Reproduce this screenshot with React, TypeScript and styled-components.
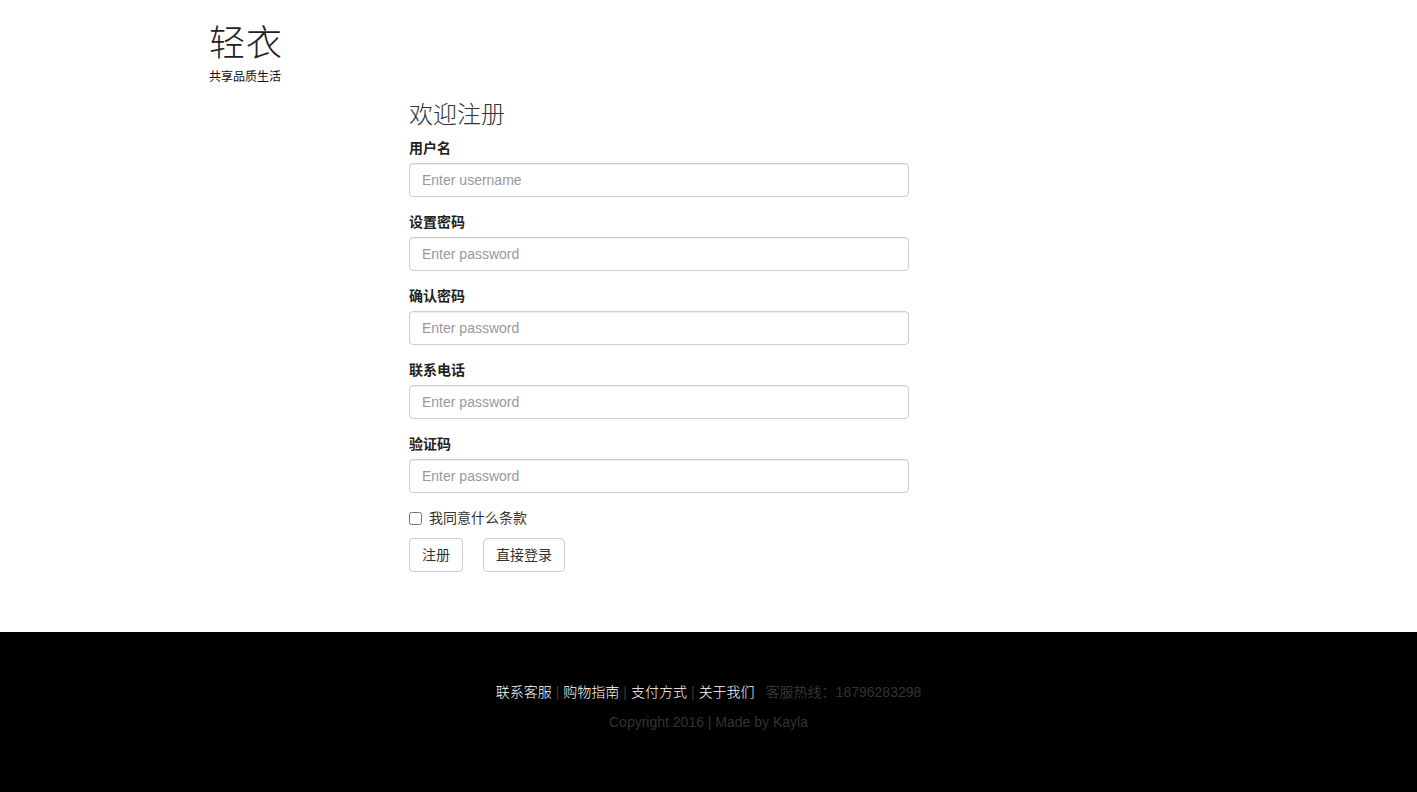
import React from 'react';
import styled, { createGlobalStyle } from 'styled-components';

const GlobalStyle = createGlobalStyle`
	html, body {
		margin: 0;
		padding: 0;
		background: #fff;
	}
	body {
		font-family: "Liberation Sans", "Noto Sans CJK SC", Arial, sans-serif;
		font-size: 14px;
		line-height: 20px;
		color: #333;
	}
	* {
		box-sizing: border-box;
	}
`;

const Header = styled.header`
	padding: 16px 0 0 209px;
`;

const Logo = styled.h1`
	margin: 0;
	font-family: "Noto Sans CJK SC", serif;
	font-weight: 300;
	font-size: 36px;
	line-height: 48px;
	color: #222;
	letter-spacing: 1px;
`;

const Slogan = styled.p`
	margin: 5px 0 0;
	font-size: 12px;
	line-height: 16px;
	color: #111;
`;

const Main = styled.main`
	padding-left: 409px;
	padding-bottom: 60px;
`;

const Form = styled.form`
	width: 500px;
`;

const Title = styled.h3`
	margin: 12px 0 9px;
	font-family: "Noto Sans CJK SC", sans-serif;
	font-weight: 300;
	font-size: 24px;
	line-height: 32px;
	color: #333;
`;

const Group = styled.div`
	margin-bottom: 15px;
`;

const Label = styled.label`
	display: block;
	margin-bottom: 5px;
	font-weight: 700;
	line-height: 20px;
	color: #222;
`;

const Input = styled.input`
	display: block;
	width: 100%;
	height: 34px;
	padding: 6px 12px;
	font-family: inherit;
	font-size: 14px;
	color: #555;
	border: 1px solid #ccc;
	border-radius: 4px;
	box-shadow: inset 0 1px 1px rgba(0, 0, 0, 0.075);
	outline: none;

	&::placeholder {
		color: #999;
	}
`;

const CheckRow = styled.label`
	display: flex;
	align-items: center;
	gap: 7px;
	height: 20px;
	margin-bottom: 10px;

	input {
		margin: 0;
		width: 13px;
		height: 13px;
	}
`;

const Buttons = styled.div`
	display: flex;
	gap: 20px;
`;

const Button = styled.button`
	height: 34px;
	padding: 6px 12px;
	font-family: inherit;
	font-size: 14px;
	line-height: 20px;
	color: #333;
	background: #fff;
	border: 1px solid #ccc;
	border-radius: 4px;
	cursor: pointer;
`;

const Footer = styled.footer`
	height: 160px;
	padding-top: 50px;
	background: #000;
	text-align: center;
`;

const FooterLine = styled.div`
	line-height: 20px;
	margin-bottom: 10px;
	color: #333;
`;

const FooterLink = styled.a`
	color: #fff;
	font-weight: 300;
	text-decoration: none;
`;

const Sep = styled.span`
	color: #2f3f2f;
	margin: 0 4px;
`;

const Hotline = styled.span`
	color: #333;
	margin-left: 11px;
`;

const fields = [
	{ label: '用户名', placeholder: 'Enter username', type: 'text' },
	{ label: '设置密码', placeholder: 'Enter password', type: 'password' },
	{ label: '确认密码', placeholder: 'Enter password', type: 'password' },
	{ label: '联系电话', placeholder: 'Enter password', type: 'text' },
	{ label: '验证码', placeholder: 'Enter password', type: 'text' }
];

const links = ['联系客服', '购物指南', '支付方式', '关于我们'];

export default function App(): JSX.Element {
	return (
		<>
			<GlobalStyle />
			<Header>
				<Logo>轻衣</Logo>
				<Slogan>共享品质生活</Slogan>
			</Header>
			<Main>
				<Form onSubmit={(e) => e.preventDefault()}>
					<Title>欢迎注册</Title>
					{fields.map((f) => (
						<Group key={f.label}>
							<Label>{f.label}</Label>
							<Input type={f.type} placeholder={f.placeholder} />
						</Group>
					))}
					<CheckRow>
						<input type="checkbox" />
						<span>我同意什么条款</span>
					</CheckRow>
					<Buttons>
						<Button type="submit">注册</Button>
						<Button type="button">直接登录</Button>
					</Buttons>
				</Form>
			</Main>
			<Footer>
				<FooterLine>
					{links.map((l, i) => (
						<React.Fragment key={l}>
							{i > 0 && <Sep>|</Sep>}
							<FooterLink href="#">{l}</FooterLink>
						</React.Fragment>
					))}
					<Hotline>客服热线：18796283298</Hotline>
				</FooterLine>
				<FooterLine>Copyright 2016 | Made by Kayla</FooterLine>
			</Footer>
		</>
	);
}
